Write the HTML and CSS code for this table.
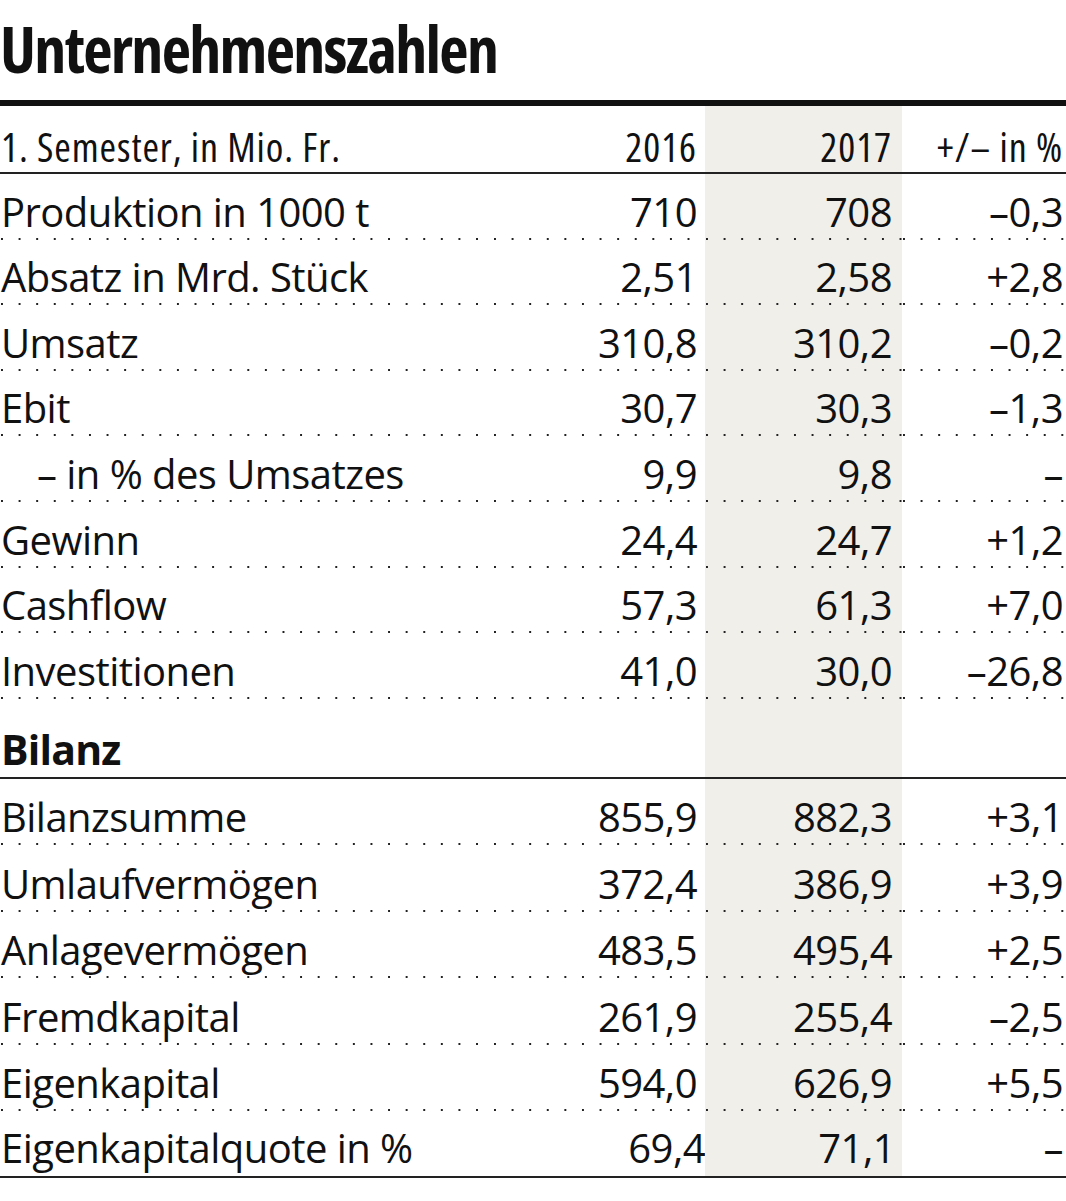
FILE: index.html
```html
<!DOCTYPE html>
<html lang="de">
<head>
<meta charset="utf-8">
<title>Unternehmenszahlen</title>
<link rel="stylesheet" href="styles.css">
</head>
<body>
<div class="card">
  <h1 class="title">Unternehmenszahlen</h1>
  <div class="table">
    <div class="row head">
      <div class="cell label">1. Semester, in Mio. Fr.</div>
      <div class="cell num">2016</div>
      <div class="cell num cur">2017</div>
      <div class="cell num pct">+/– in %</div>
    </div>

    <div class="section s1">
      <div class="row dot"><div class="cell label">Produktion in 1000 t</div><div class="cell num">710</div><div class="cell num cur">708</div><div class="cell num pct">–0,3</div></div>
      <div class="row dot"><div class="cell label">Absatz in Mrd. Stück</div><div class="cell num">2,51</div><div class="cell num cur">2,58</div><div class="cell num pct">+2,8</div></div>
      <div class="row dot"><div class="cell label">Umsatz</div><div class="cell num">310,8</div><div class="cell num cur">310,2</div><div class="cell num pct">–0,2</div></div>
      <div class="row dot"><div class="cell label">Ebit</div><div class="cell num">30,7</div><div class="cell num cur">30,3</div><div class="cell num pct">–1,3</div></div>
      <div class="row dot"><div class="cell label indent">– in % des Umsatzes</div><div class="cell num">9,9</div><div class="cell num cur">9,8</div><div class="cell num pct">–</div></div>
      <div class="row dot"><div class="cell label">Gewinn</div><div class="cell num">24,4</div><div class="cell num cur">24,7</div><div class="cell num pct">+1,2</div></div>
      <div class="row dot"><div class="cell label">Cashflow</div><div class="cell num">57,3</div><div class="cell num cur">61,3</div><div class="cell num pct">+7,0</div></div>
      <div class="row dot"><div class="cell label">Investitionen</div><div class="cell num">41,0</div><div class="cell num cur">30,0</div><div class="cell num pct">–26,8</div></div>
    </div>

    <div class="row sub">
      <div class="cell label strong">Bilanz</div>
      <div class="cell num"></div>
      <div class="cell num cur"></div>
      <div class="cell num pct"></div>
    </div>

    <div class="section s2">
      <div class="row dot"><div class="cell label">Bilanzsumme</div><div class="cell num">855,9</div><div class="cell num cur">882,3</div><div class="cell num pct">+3,1</div></div>
      <div class="row dot"><div class="cell label">Umlaufvermögen</div><div class="cell num">372,4</div><div class="cell num cur">386,9</div><div class="cell num pct">+3,9</div></div>
      <div class="row dot"><div class="cell label">Anlagevermögen</div><div class="cell num">483,5</div><div class="cell num cur">495,4</div><div class="cell num pct">+2,5</div></div>
      <div class="row dot"><div class="cell label">Fremdkapital</div><div class="cell num">261,9</div><div class="cell num cur">255,4</div><div class="cell num pct">–2,5</div></div>
      <div class="row dot"><div class="cell label">Eigenkapital</div><div class="cell num">594,0</div><div class="cell num cur">626,9</div><div class="cell num pct">+5,5</div></div>
      <div class="row last"><div class="cell label">Eigenkapitalquote in %</div><div class="cell num shift">69,4</div><div class="cell num cur shift">71,1</div><div class="cell num pct">–</div></div>
    </div>
  </div>
</div>
</body>
</html>
```
FILE: styles.css
```css
html, body {
  margin: 0;
  padding: 0;
  background: #ffffff;
}

.card {
  width: 1066px;
  color: #111111;
  font-family: "Open Sans", "Noto Sans", sans-serif;
  font-stretch: normal;
}

.title {
  margin: 0;
  height: 100px;
  box-sizing: border-box;
  padding: 17px 0 0 0;
  font-size: 64px;
  line-height: 64px;
  font-weight: 700;
  font-stretch: condensed;
  letter-spacing: -1.7px;
  white-space: nowrap;
}

.table {
  border-top: 6px solid #111111;
}

.row {
  display: grid;
  grid-template-columns: 493px 212px 197px 164px;
  box-sizing: border-box;
}

.cell {
  display: flex;
  align-items: flex-end;
  box-sizing: border-box;
  padding-bottom: 8px;
  font-size: 40px;
  line-height: 40px;
  letter-spacing: -0.55px;
  white-space: nowrap;
}

.label {
  justify-content: flex-start;
  padding-left: 1px;
}

.indent {
  padding-left: 37px;
}

.num {
  justify-content: flex-end;
  padding-right: 8px;
}

.cur {
  background-color: #f0efea;
  padding-right: 10px;
}

.pct {
  padding-right: 3px;
}

.head {
  height: 68px;
  border-bottom: 2px solid #222222;
}

.head .cell {
  font-size: 40px;
  font-stretch: condensed;
  letter-spacing: 0.9px;
  padding-bottom: 5px;
}

.s1 .row {
  height: 65.6px;
}

.s2 .row {
  height: 66.5px;
}

.dot .cell {
  background-image: linear-gradient(to right, #222222 0, #222222 2px, transparent 2px);
  background-size: 17.6px 2px;
  background-repeat: repeat-x;
  background-position: 1px 100%;
}

.sub {
  height: 80px;
  border-bottom: 2px solid #222222;
}

.sub .cell {
  padding-bottom: 8px;
}

.strong {
  font-weight: 700;
  font-size: 41px;
  letter-spacing: -0.8px;
}

.last {
  border-bottom: 2px solid #222222;
}

.last .num.shift {
  padding-right: 0;
}

.last .cur.shift {
  padding-right: 7px;
}
```
